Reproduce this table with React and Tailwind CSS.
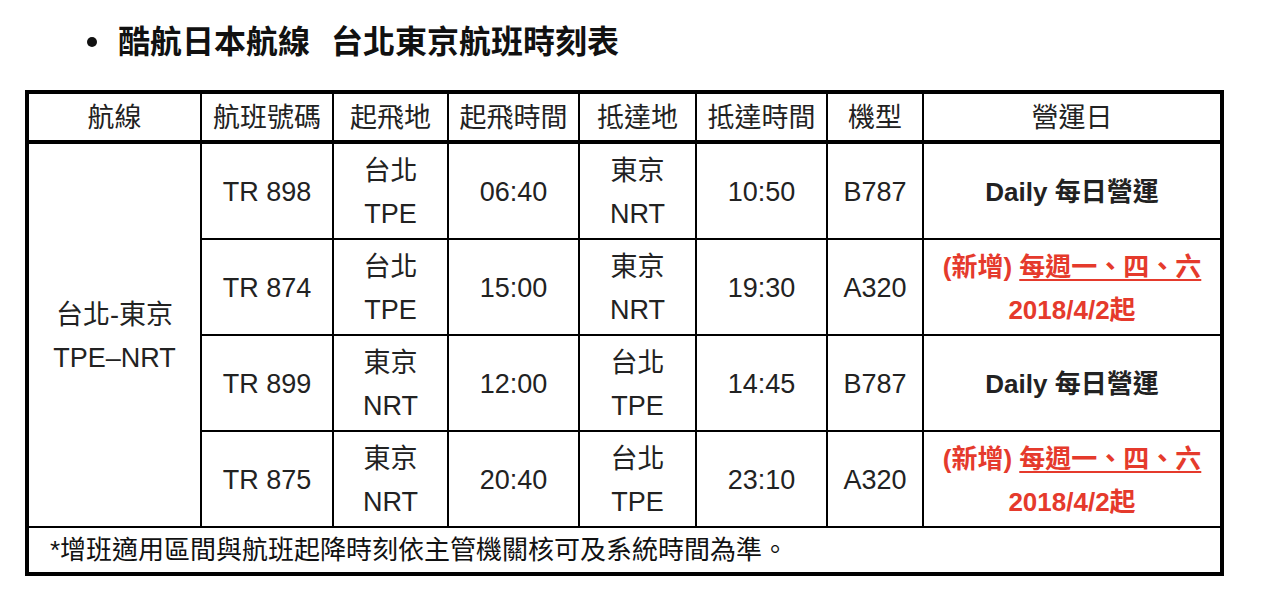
import React from 'react';

const font = { fontFamily: '"Liberation Sans", "Noto Sans CJK TC", sans-serif' };

const headers = ['航線', '航班號碼', '起飛地', '起飛時間', '抵達地', '抵達時間', '機型', '營運日'];

const flights = [
  { no: 'TR 898', from: ['台北', 'TPE'], dep: '06:40', to: ['東京', 'NRT'], arr: '10:50', type: 'B787', daily: true },
  { no: 'TR 874', from: ['台北', 'TPE'], dep: '15:00', to: ['東京', 'NRT'], arr: '19:30', type: 'A320', daily: false },
  { no: 'TR 899', from: ['東京', 'NRT'], dep: '12:00', to: ['台北', 'TPE'], arr: '14:45', type: 'B787', daily: true },
  { no: 'TR 875', from: ['東京', 'NRT'], dep: '20:40', to: ['台北', 'TPE'], arr: '23:10', type: 'A320', daily: false },
];

function Cell({ children, className = '' }) {
  return (
    <div className={`bg-white flex flex-col items-center justify-center text-center pt-[3px] ${className}`}>
      {children}
    </div>
  );
}

function Days({ daily }) {
  if (daily) {
    return <div className="font-bold text-[26px] text-[#222]">Daily 每日營運</div>;
  }
  return (
    <div className="font-bold text-[26px] text-[#e53a2c]">
      <div>(新增) <span className="underline underline-offset-[3px] decoration-2">每週一、四、六</span></div>
      <div>2018/4/2起</div>
    </div>
  );
}

export default function App() {
  return (
    <div className="bg-white min-h-screen w-[1274px] h-[612px] overflow-hidden" style={font}>
      {/* title */}
      <div className="flex items-center h-[84px] pl-[87px] pb-[1px]">
        <span className="w-[10px] h-[10px] rounded-full bg-[#111] mr-[21px]" />
        <h1 className="text-[32px] font-bold text-[#111] leading-none">
          酷航日本航線<span className="inline-block w-[21px]" />台北東京航班時刻表
        </h1>
      </div>

      {/* table */}
      <div className="ml-[25px] mt-[6px] w-[1199px] bg-black p-[4px]">
        <div className="grid grid-cols-[171px_130px_113px_129px_115px_129px_94px_296px] gap-[2px] text-[27px] text-[#222] leading-[43px]">
          {headers.map((h) => (
            <Cell key={h} className="h-[48px] border-b-2 border-black">{h}</Cell>
          ))}

          <Cell className="row-span-4">
            <div>台北-東京</div>
            <div>TPE–NRT</div>
          </Cell>

          {flights.map((f) => (
            <React.Fragment key={f.no}>
              <Cell className="h-[94px]">{f.no}</Cell>
              <Cell><div>{f.from[0]}</div><div>{f.from[1]}</div></Cell>
              <Cell>{f.dep}</Cell>
              <Cell><div>{f.to[0]}</div><div>{f.to[1]}</div></Cell>
              <Cell>{f.arr}</Cell>
              <Cell>{f.type}</Cell>
              <Cell><Days daily={f.daily} /></Cell>
            </React.Fragment>
          ))}

          <div className="col-span-8 bg-white h-[44px] flex items-center pl-[21px] text-[26px] text-[#111]">
            *增班適用區間與航班起降時刻依主管機關核可及系統時間為準。
          </div>
        </div>
      </div>
    </div>
  );
}
